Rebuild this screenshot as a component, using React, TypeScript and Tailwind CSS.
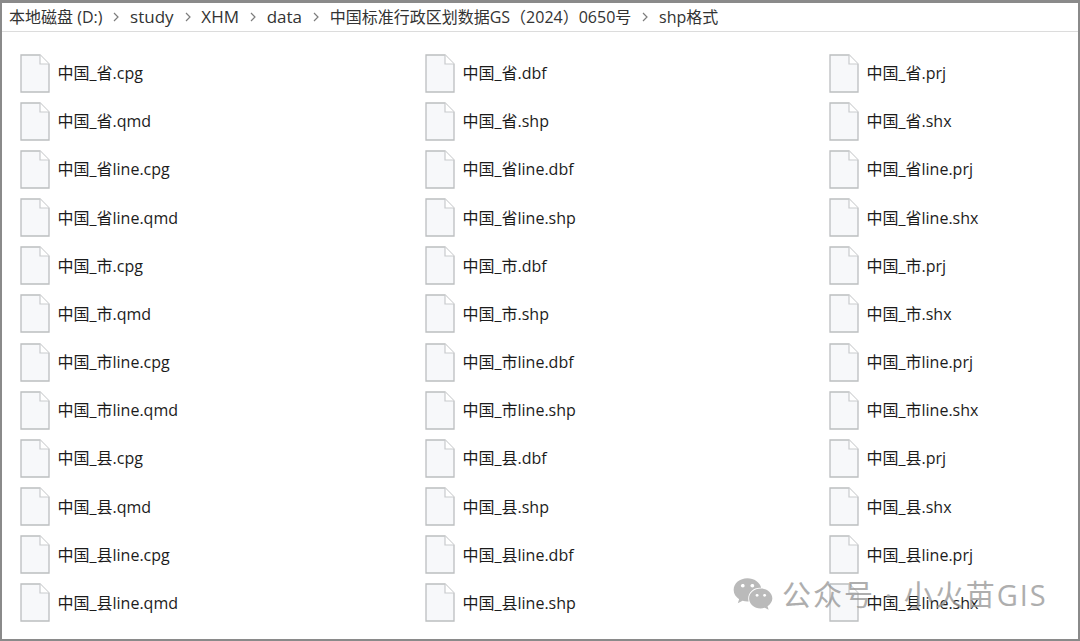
import React from "react";
import { FaWeixin } from "react-icons/fa";

const groups = ["省", "省line", "市", "市line", "县", "县line"];
const rows = [
  [".cpg", ".dbf", ".prj"],
  [".qmd", ".shp", ".shx"],
];
const files: string[] = [];
groups.forEach((g) => rows.forEach((r) => r.forEach((e) => files.push(`中国_${g}${e}`))));

const crumbs = [
  { t: "study", latin: true },
  { t: "XHM", latin: true },
  { t: "data", latin: true },
  { t: "中国标准行政区划数据GS（2024）0650号", latin: false },
  { t: "shp格式", latin: false },
];

function FileIcon() {
  return (
    <svg width="30" height="39" viewBox="0 0 30 39" className="shrink-0">
      <path d="M1 1H20L29 10V38H1Z" fill="#f7f8fa" stroke="#bcbec0" strokeWidth="1.3" />
      <path d="M20 1V10H29" fill="#ffffff" stroke="#c9cbcd" strokeWidth="1.2" />
    </svg>
  );
}

function Chevron() {
  return (
    <svg width="8" height="10" viewBox="0 0 8 10" className="ml-[10px] mr-[9.7px]">
      <path d="M2 1L6 5L2 9" fill="none" stroke="#7d7d7d" strokeWidth="1.2" />
    </svg>
  );
}

export default function App() {
  return (
    <div
      className="relative w-[1080px] h-[641px] overflow-hidden bg-white border-x-2 border-t-[3px] border-b-2 border-[#8a8a8a] text-[#1c1c1c] text-[16px]"
      style={{ fontFamily: '"Open Sans", "Noto Sans CJK SC", sans-serif' }}
    >
      <div className="flex items-center h-[29px] pl-[7px] border-b border-[#dcdcdc] whitespace-nowrap text-[#333333]">
        <span>本地磁盘 (D:)</span>
        {crumbs.map((c) => (
          <React.Fragment key={c.t}>
            <Chevron />
            <span className={c.latin ? "text-[17px]" : ""}>{c.t}</span>
          </React.Fragment>
        ))}
      </div>
      <div className="grid grid-cols-[405px_404px_1fr] auto-rows-[48.18px] pl-[18px] pt-[17px]">
        {files.map((f) => (
          <div key={f} className="flex items-center gap-[7.5px] whitespace-nowrap">
            <FileIcon />
            <span>{f}</span>
          </div>
        ))}
      </div>
      <div className="absolute left-[730px] top-[573px] flex items-center text-[#9a9a9a] opacity-80 text-[29px] tracking-[2px] leading-none whitespace-nowrap">
        <FaWeixin className="w-[42px] h-[36px] text-[#aaaaaa] mr-[8px]" />
        <span>公众号 · 小火苗GIS</span>
      </div>
    </div>
  );
}
